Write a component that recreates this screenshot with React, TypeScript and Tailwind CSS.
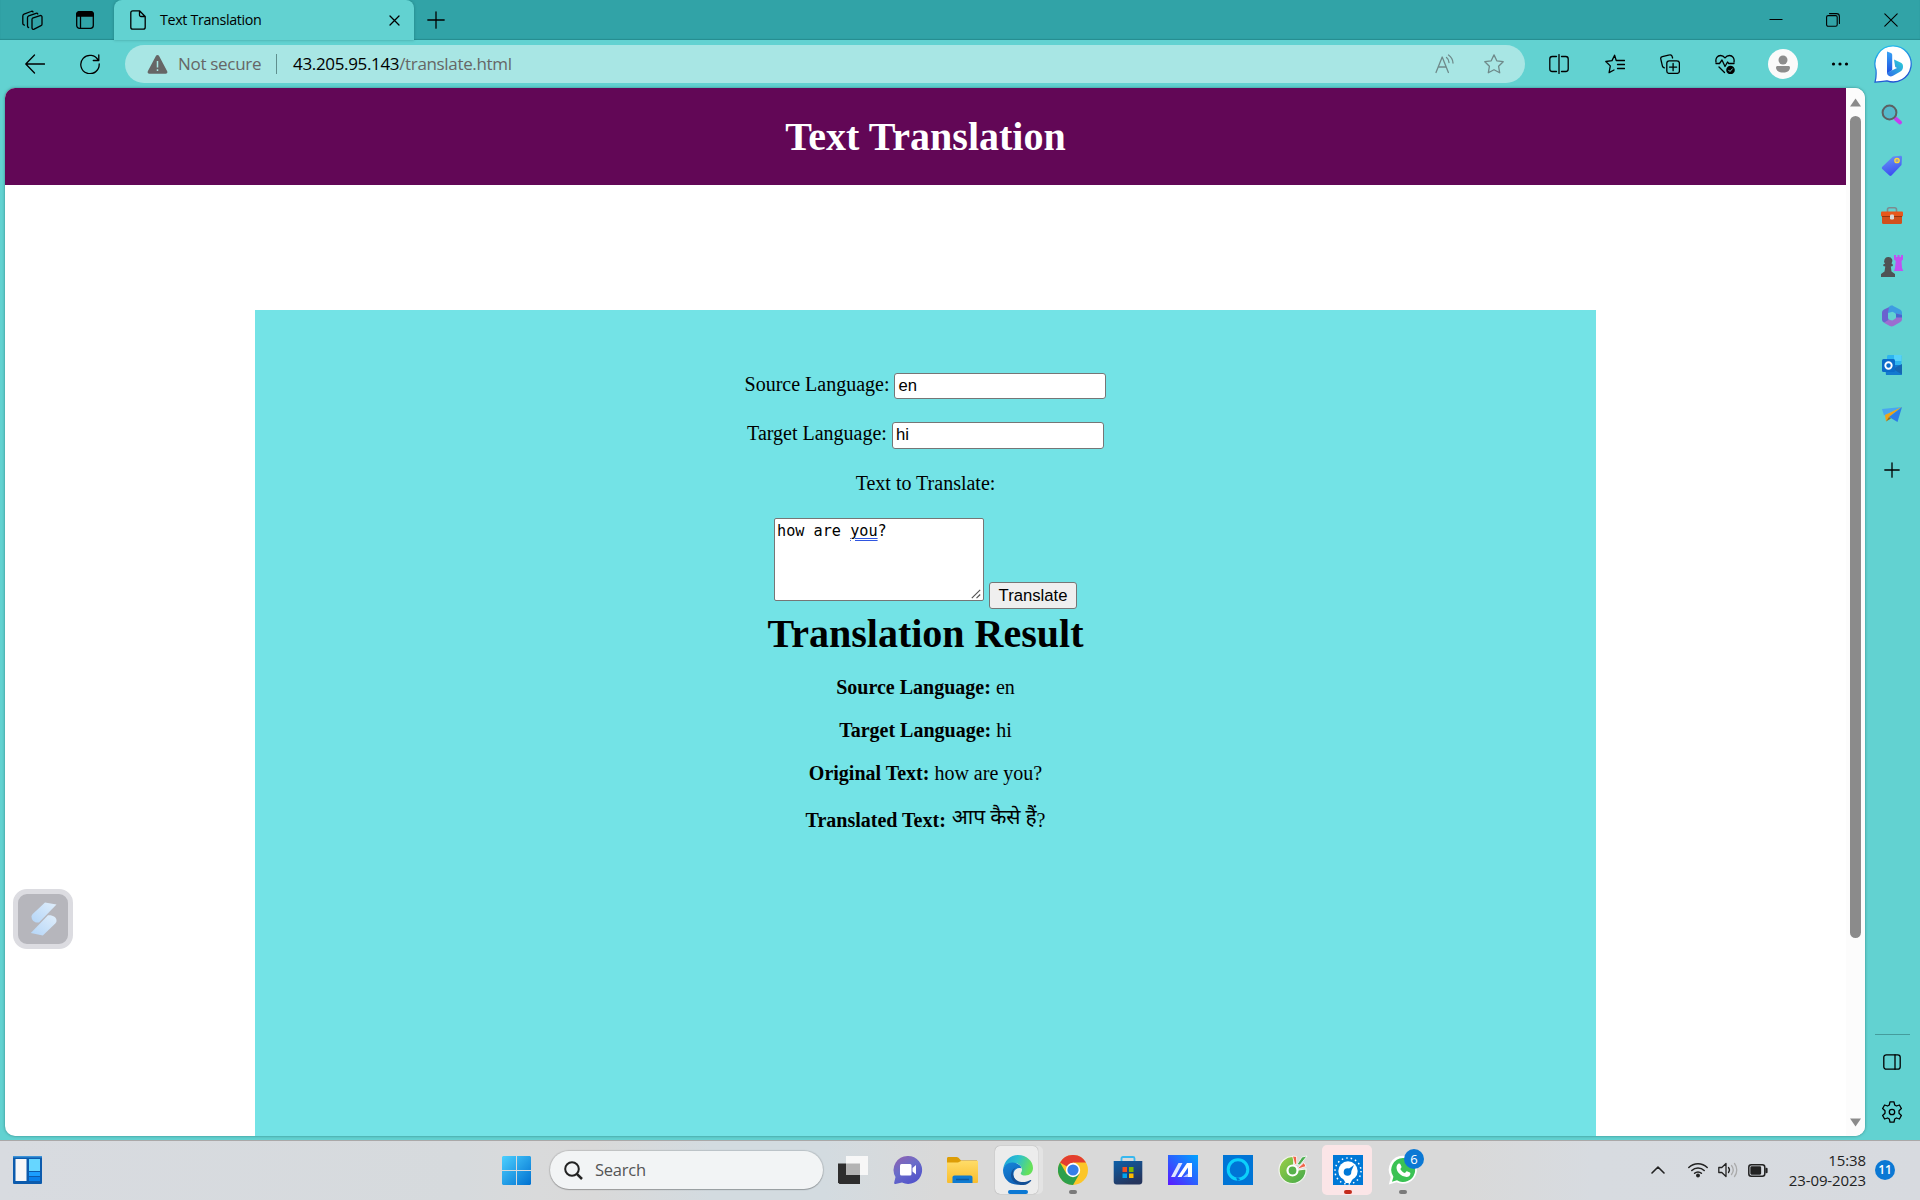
import React from "react";

type SvgProps = { children: React.ReactNode; w?: number; h?: number; vb?: string; className?: string };

function Line({ children, w = 20, h = 20, vb = "0 0 20 20", className = "" }: SvgProps) {
  return (
    <svg width={w} height={h} viewBox={vb} fill="none" stroke="currentColor" strokeWidth="1.3" strokeLinecap="round" strokeLinejoin="round" className={"shrink-0 " + className}>
      {children}
    </svg>
  );
}

function Art({ children, w = 30, h = 30, vb = "0 0 30 30", className = "" }: SvgProps) {
  return (
    <svg width={w} height={h} viewBox={vb} className={"shrink-0 " + className}>
      {children}
    </svg>
  );
}

const STAR = "M10 .9l2.8 5.9 6.4.9-4.6 4.6 1.1 6.5-5.7-3.1-5.7 3.1 1.1-6.5L.8 7.7l6.4-.9z";

function TabStrip() {
  return (
    <div className="flex h-10 items-start bg-[#31a3a7] text-black shadow-[inset_0_-1px_1px_rgba(0,70,70,0.25)]">
      <div className="flex h-10 w-[114px] items-center rounded-br-lg pl-[22px]">
        <Line w={21} h={21} vb="0 0 21 21">
          <path d="M10.5 8.2l7.6-2.6c1-.3 1.9.2 1.9 1.2v7.4c0 .7-.4 1.3-1 1.5l-6.8 3.4c-1.200.5-2.2.1-2.2-1V9.500c0-.6 0-1 .5-1.300z" />
          <path d="M6.600 17.500c-.7-.1-1.100-.6-1.100-1.400V7.700c0-.9.4-1.500 1.200-1.800l7.300-2.600c.8-.3 1.500 0 1.800.7" />
          <path d="M2.400 15.200C1.400 15 .8 14.500.8 13.600V6c0-.9.4-1.500 1.200-1.800L9 1.500c.9-.4 1.700-.1 2 .4" />
        </Line>
        <Line w={18} h={18} vb="0 0 18 18" className="ml-[33px]">
          <rect x=".7" y=".7" width="16.600" height="16.600" rx="2.800" />
          <path d="M.7 5V3.500A2.800 2.800 0 013.500.7h11a2.800 2.800 0 012.800 2.800V5z" fill="currentColor" />
          <path d="M4.500 5.500v11.500" />
        </Line>
      </div>
      <div className="flex h-10 w-[300px] items-center rounded-t-lg bg-[#62d2d1] pl-4 shadow-[0_0_3px_rgba(0,60,60,0.35)]">
        <Line w={16} h={20} vb="0 0 16 20">
          <path d="M9.500.8H2.800C1.700.8.8 1.700.8 2.800v14.400c0 1.100.9 2 2 2h10.400c1.100 0 2-.9 2-2V6.500L9.500.8zV5c0 .9.6 1.500 1.500 1.500h4.200" />
        </Line>
        <span className="ml-[14px] w-[229px] font-['Open_Sans',sans-serif] text-[14.300px] tracking-[-0.35px]">Text Translation</span>
        <Line w={11} h={11} vb="0 0 11 11"><path d="M1 1l9 9M10 1l-9 9" /></Line>
      </div>
      <div className="flex h-10 flex-1 items-center pl-[13px]">
        <Line w={18} h={18} vb="0 0 18 18"><path d="M9 .8v16.400M.8 9h16.400" /></Line>
        <div className="ml-auto flex items-center pr-[22px]">
          <Line w={14} h={14} vb="0 0 14 14"><path d="M.5 6.500h13" strokeLinecap="butt" strokeWidth="1" /></Line>
          <Line w={14} h={14} vb="0 0 14 14" className="ml-[43px]">
            <rect x=".6" y="2.600" width="10.600" height="10.600" rx="1.500" strokeWidth="1.100" />
            <path d="M3.500.6h7c1.700 0 2.900 1.200 2.900 2.900v7" strokeWidth="1.100" />
          </Line>
          <Line w={14} h={14} vb="0 0 14 14" className="ml-[44px]"><path d="M.8.8l12.400 12.400M13.200.8L.8 13.200" strokeWidth="1.100" /></Line>
        </div>
      </div>
    </div>
  );
}

function Toolbar() {
  return (
    <div className="flex h-12 items-center pl-[25px] pr-2 text-black">
      <Line><path d="M19.500 10H1M9.500 1L.8 10l8.700 9" /></Line>
      <Line className="ml-[35px]"><path d="M18.300 6.500A9.200 9.200 0 1019.200 10M18.800 1v5.500h-5.500" /></Line>
      <div className="ml-[25px] flex h-[38px] w-[1400px] items-center rounded-full bg-[#a8e6e4] pl-[22px] pr-[21px] font-['Open_Sans',sans-serif] text-[17px] text-[#666]">
        <svg width="21" height="19" viewBox="0 0 21 19" className="shrink-0">
          <path d="M8.900 1a1.800 1.800 0 013.200 0l8.100 15.200c.6 1.200-.2 2.600-1.600 2.600H2.400C1 18.800.2 17.400.8 16.200z" fill="#666" />
          <path d="M10.500 6v6.500M10.500 14.200v1.700" stroke="#a8e6e4" strokeWidth="1.500" />
        </svg>
        <span className="ml-2.5 w-[98px] tracking-[-0.3px]">Not secure</span>
        <span className="h-5 w-px bg-[#5f8f8e]" />
        <span className="ml-[16px] tracking-[-0.340px]"><span className="text-black">43.205.95.143</span>/translate.html</span>
        <div className="ml-auto flex items-center text-[#6f8a8a]">
          <Line><path d="M1 18.500L7.200 3l6.200 15.500M3.200 13h8M11.500 3.500c1.600 1.200 2.500 3 2.500 5M13.500 1c2.600 1.800 4.300 4.600 4.500 8" /></Line>
          <Line className="ml-[29px]"><path d={STAR} /></Line>
        </div>
      </div>
      <Line className="ml-[24px]">
        <path d="M7.500 2.500H3.300C1.800 2.500.8 3.500.8 5v10c0 1.500 1 2.500 2.500 2.500h4.200M12.500 2.500h4.200c1.500 0 2.500 1 2.500 2.500v10c0 1.500-1 2.500-2.500 2.500h-4.200M10 .6v18.800" />
      </Line>
      <Line className="ml-[36px]">
        <path d="M12 6.500h-.8L9.600 1.200 7 6.600.8 7.500l4.500 4.400-1.200 6.700L9 16M12.500 6.500h7M12.500 10.500h7M12.500 14.500h7" />
      </Line>
      <Line className="ml-[35px]">
        <rect x="6.800" y="6.800" width="12.600" height="12.600" rx="2.500" />
        <path d="M13.100 9.500v7.200M9.500 13.100h7.200M4.500 13.800c-1 0-1.700-.6-2-1.500L.8 5.200C.5 4 1.100 2.900 2.300 2.600L9.600.9c1-.3 2.200.3 2.500 1.400l.5 1.700" />
      </Line>
      <Line className="ml-[35px]">
        <path d="M1 8C.3 4.500 2.400 1.500 5.500 1.500c2 0 3.300.8 4.500 2.400 1.200-1.600 2.500-2.400 4.500-2.400C17.600 1.500 19.700 4.500 19 8M1 9.500h3.500L7 6l3 6.500L12.500 8l1.200 1.500H19M4 13l5.500 5.500" />
        <circle cx="15.500" cy="16" r="4.300" fill="currentColor" stroke="none" />
        <path d="M13.700 16.200l1.300 1.300 2.400-2.700" stroke="#62d2d1" strokeWidth="1" />
      </Line>
      <div className="ml-[33px] flex size-[30px] items-center justify-center rounded-full bg-[#fafafa]">
        <svg width="16" height="18" viewBox="0 0 16 18" fill="#8c8c8c"><circle cx="8" cy="5" r="4.500" /><path d="M2.500 11h11c.8 0 1.500.7 1.500 1.500 0 3-2.700 5-7 5s-7-2-7-5c0-.8.7-1.500 1.500-1.500z" /></svg>
      </div>
      <svg width="18" height="4" viewBox="0 0 18 4" className="ml-[33px] shrink-0"><circle cx="2.500" cy="2" r="1.600" /><circle cx="9" cy="2" r="1.600" /><circle cx="15.500" cy="2" r="1.600" /></svg>
      <svg width="38" height="38" viewBox="0 0 38 38" className="ml-[25px] shrink-0">
        <defs>
          <linearGradient id="bg1" x1="0" y1="0" x2=".3" y2="1"><stop offset="0" stopColor="#22c7ee" /><stop offset="1" stopColor="#2355d4" /></linearGradient>
          <linearGradient id="bg2" x1="0" y1="0" x2="0" y2="1"><stop offset="0" stopColor="#38a4f5" /><stop offset="1" stopColor="#1e4fe0" /></linearGradient>
          <linearGradient id="bg3" x1="1" y1="0" x2="0" y2="1"><stop offset="0" stopColor="#2bd3d6" /><stop offset="1" stopColor="#2f6bea" /></linearGradient>
        </defs>
        <path d="M19 .9A18 18 0 11 13 35.800c-3.500.5-7.500 1-12 1.300C2.200 33.500 2.400 31 2 25A18 18 0 0119 .9z" fill="#fff" stroke="url(#bg1)" strokeWidth="1.300" />
        <path d="M13 6.500l4 1.500c.8.300 1.200.9 1.200 1.700v15.600L13 28.500z" fill="url(#bg2)" />
        <path d="M20 14.500l6.500 3c1.900.9 2.800 2.500 2.500 4.800-.2 2-1.300 3.500-3 4.500l-7 4c-3.200 1.700-6-.2-6-3l10-4.800-1.800-1z" fill="url(#bg3)" />
      </svg>
    </div>
  );
}

function Field({ label, value, box, id }: { label: string; value: string; box: string; id: string }) {
  return (
    <div className="flex items-start justify-center">
      <label htmlFor={id} className="mr-[5px] leading-[22px]">{label}</label>
      <input id={id} defaultValue={value} spellCheck={false} className={"w-[212px] rounded-[3px] border border-[#767676] bg-white px-[3px] font-['Liberation_Sans',Arial,sans-serif] text-[16.670px] leading-5 text-black outline-none " + box} />
    </div>
  );
}

function Result({ label, value }: { label: string; value: string }) {
  return <p className="mb-[19px] leading-[24px]"><b>{label}</b> {value}</p>;
}

function WebPage() {
  return (
    <div className="relative flex h-[1048px] w-[1860px] overflow-hidden rounded-[10px] bg-white shadow-[0_0_3px_rgba(0,60,60,0.5)]">
      <main className="flex w-[1841px] flex-col font-['Liberation_Serif','Times_New_Roman',serif] text-[20px] text-black">
        <h1 className="h-[97px] bg-[#620756] text-center text-[40px] font-bold leading-[97px] text-white">Text Translation</h1>
        <section className="ml-[250px] mt-[125px] w-[1341px] flex-1 bg-[#73e3e6] pt-[63px] text-center">
          <Field id="source" label="Source Language:" value="en" box="h-[26px]" />
          <div className="h-[23px]" />
          <Field id="target" label="Target Language:" value="hi" box="h-[27px] pb-0.5" />
          <p className="mt-[22px] leading-[24px]">Text to Translate:</p>
          <div className="mt-[23px] flex h-[91px] justify-center">
            <div className="flex h-[83px] w-[210px] flex-col justify-between rounded-[2px] border border-[#767676] bg-white pl-[2px] pt-[3px] text-left font-['DejaVu_Sans_Mono',monospace] text-[15.200px] leading-[19px]">
              <div>how are <span className="underline decoration-[#2f55e0] decoration-double decoration-1 underline-offset-2">you</span>?</div>
              <svg width="10" height="10" viewBox="0 0 10 10" className="mb-px mr-[2px] self-end" stroke="#555" strokeWidth="1.200"><path d="M.8 9.200l8.400-8.400M5.500 9.200l3.700-3.700" /></svg>
            </div>
            <button className="ml-[5px] h-[27px] w-[88px] self-end rounded-[3px] border border-[#767676] bg-[#efefef] font-['Liberation_Sans',Arial,sans-serif] text-[16.670px] leading-[25px]">Translate</button>
          </div>
          <h1 className="mb-[18px] pt-px text-[40px] font-bold leading-[47px]">Translation Result</h1>
          <Result label="Source Language:" value="en" />
          <Result label="Target Language:" value="hi" />
          <Result label="Original Text:" value="how are you?" />
          <p className="mt-[23px] leading-[24px]"><b>Translated Text:</b> <span lang="hi" className="relative -top-[3px] ml-px font-['Liberation_Serif','Noto_Sans',sans-serif] text-[21px] tracking-[-0.1px]">आप कैसे हैं</span>?</p>
        </section>
      </main>
      <div className="flex w-[19px] flex-col items-center bg-[#fcfcfc] pt-2.5">
        <svg width="11" height="9" viewBox="0 0 11 9"><path d="M5.500.5L11 8.500H0z" fill="#8b8b8b" /></svg>
        <div className="mt-[9px] h-[822px] w-[11px] rounded-full bg-[#8b8b8b]" />
        <svg width="11" height="9" viewBox="0 0 11 9" className="mb-[9px] mt-auto"><path d="M5.500 8.500L11 .5H0z" fill="#8b8b8b" /></svg>
      </div>
      <div className="absolute left-2 top-[801px] flex size-[60px] items-center justify-center rounded-[14px] border-[5px] border-[#dcdce1] bg-[#b6b6bc]">
        <svg width="28" height="34" viewBox="0 0 28 34" className="ml-0.5">
          <defs><linearGradient id="fl" x1="1" y1="0" x2="0" y2="1"><stop offset="0" stopColor="#e0eefb" /><stop offset="1" stopColor="#b4d5f7" /></linearGradient></defs>
          <path d="M15 .5l11.500 2L9 20.500C4.500 21 1.500 18.500 1.500 14.500c0-1 .5-1.800 1.200-2.500z" fill="url(#fl)" />
          <path d="M12.800 33.500L.8 31 18 13.300c5-.4 8.500 2 8.500 5.500 0 1-.5 2-1.200 2.700z" fill="url(#fl)" />
        </svg>
      </div>
    </div>
  );
}

function SideBar() {
  return (
    <aside className="flex w-[54px] flex-col items-center">
      <div className="flex h-[1048px] flex-col items-center pt-[16px]">
        <Art w={22} h={22} vb="0 0 22 22">
          <path d="M14.500 14.500l4.500 4" stroke="#c63df0" strokeWidth="4" strokeLinecap="round" />
          <circle cx="8.500" cy="8.500" r="6.900" fill="#55b9cb" stroke="#5d6062" strokeWidth="2" />
        </Art>
        <Art w={22} h={22} vb="0 0 22 22" className="mt-[29px]">
          <defs><linearGradient id="tag" x2=".3" y2="1"><stop stopColor="#6a9bf5" /><stop offset="1" stopColor="#3d50f2" /></linearGradient></defs>
          <path d="M12 1.500l7.500-.7c1 0 1.600.6 1.500 1.600L20.500 10l-10 10.500c-.7.7-1.500.6-2.100 0L1.300 14c-.6-.7-.6-1.500 0-2.200z" fill="url(#tag)" />
          <circle cx="16" cy="5.500" r="2.200" fill="#a7a7a0" stroke="#ffd735" strokeWidth="1.300" />
        </Art>
        <Art w={24} h={20} vb="0 0 24 20" className="mt-[29px]">
          <path d="M7.500 6V3.500c0-1 .7-1.800 1.800-1.800h5.400c1.100 0 1.800.8 1.800 1.800V6" fill="none" stroke="#7d8b8f" strokeWidth="1.600" />
          <rect x="2" y="8" width="20" height="10" rx="1.500" fill="#d1501d" /><rect x="1" y="5.500" width="22" height="5" rx="1" fill="#e8571c" /><path d="M2 10.500h20" stroke="#973410" />
          <rect x="10" y="8.500" width="4" height="5" rx="1.200" fill="#d8d8d8" />
        </Art>
        <Art w={24} h={24} vb="0 0 24 24" className="mt-[28px]">
          <path d="M14 1h2v2h1.500V1h2v2h1.500V1h2v4.500L21.500 7l.5 7 1.300 3H14l1-3 .8-7L14 5.500z" fill="#bf52f2" />
          <path d="M8.500 3a4 4 0 013 6.600l1.300.9v1.500l-2 .5.700 5 3.500 2.500V23H1v-3l3.500-2.500.8-5-2-.5v-1.500l1.800-.9A4 4 0 018.500 3z" fill="#4f5254" />
        </Art>
        <Art w={22} h={22} vb="0 0 22 22" className="mt-[27px]">
          <path d="M11.500.5L3 4.500C1.500 5.300 1 6.500 1 8v6.500c0 1.500 1 2.500 2.200 3.200L8 15.500 7 13V8.500c0-1 .3-1.500 1-2z" fill="#6a62cf" />
          <path d="M8 2c1.300-1.500 2.700-1.700 4.200-1L19 4.500c1.500.8 2 2 2 3.500v4.500l-6-2c0-1.500-.3-2-1.200-2.500l-2.300-1.200L7 8z" fill="#3d9ce2" />
          <path d="M21 10v4c0 1.500-.7 2.500-2 3.200L12.500 21c-1.200.6-2.500.6-3.700 0L3 17.700 8 14.500l2 .8c.6.200 1.200.2 1.800-.1l2.400-1.400c.6-.4.900-1 .9-1.700V8.500z" fill="#9c6dd0" />
          <path d="M15 8.500L21 10v2.500l-6 0z" fill="#4668cf" />
        </Art>
        <Art w={22} h={22} vb="0 0 22 22" className="mt-[27px]">
          <path d="M6 2.500C6 1.700 6.500 1 7.500 1H19c1 0 1.500.7 1.500 1.500V11h-14.500z" fill="#2eb5f0" /><path d="M13 1h7.500v6H13z" fill="#55d2fa" />
          <path d="M4 11h17v9c0 .7-.5 1-1 1H5z" fill="#1279cf" /><path d="M12 15l9-5v10.500z" fill="#1466b3" />
          <rect x="1" y="5" width="13" height="13" rx="1.500" fill="#0b6cc9" /><circle cx="7.500" cy="11.500" r="3.200" fill="none" stroke="#fff" strokeWidth="1.900" />
        </Art>
        <Art w={22} h={20} vb="0 0 22 20" className="mt-[29px]">
          <path d="M1 4L21 2 3 10.500z" fill="#4aa6f0" /><path d="M5 16.500L4 10 21 2 8 12z" fill="#f0a216" /><path d="M8 12L21 2l-4.500 15z" fill="#2b7de9" /><path d="M5 16.500l3-4.500 2 1.500z" fill="#a06a13" />
        </Art>
        <Line w={16} h={16} vb="0 0 16 16" className="mt-[37px] text-black"><path d="M8 .8v14.400M.8 8h14.400" /></Line>
        <div className="mt-auto h-px w-[35px] bg-[#459c9c]" />
        <Line w={18} h={16} vb="0 0 18 16" className="mt-[19px] text-black"><rect x=".8" y=".8" width="16.400" height="14.400" rx="2.500" /><path d="M12 .8v14.400" /></Line>
        <Line w={22} h={22} vb="0 0 22 22" className="mb-[13px] mt-[31px] text-black">
          <path d="M9 .9h4l.7 3.100 1.700 1 3-1 2 3.500L18 9.700v2.600l2.400 2.200-2 3.500-3-1-1.700 1-.7 3.100H9L8.300 18l-1.700-1-3 1-2-3.500L4 12.300V9.700L1.600 7.500l2-3.500 3 1 1.700-1z" /><circle cx="11" cy="11" r="2.700" />
        </Line>
      </div>
    </aside>
  );
}

function Slot({ children, mark = "" }: { children: React.ReactNode; mark?: string }) {
  return (
    <div className="relative flex h-[60px] w-[55px] shrink-0 items-center justify-center">
      {children}
      {mark && <span className={"absolute bottom-[6px] h-1 rounded-full " + mark} />}
    </div>
  );
}

function TaskBar() {
  return (
    <footer className="flex h-[60px] items-center border-t border-[#aaa8a8] bg-[linear-gradient(90deg,#d8dbe0_0%,#d6dadd_24%,#d9dadb_28%,#d9d9d9_31%,#d3dbe0_37%,#d3dbe0_43%,#d9d9d9_49%,#d9d9d9_76%,#d7dbe0_83%,#d7dadf_100%)] pb-px font-['Open_Sans',sans-serif] text-[#222]">
      <Art w={29} h={28} vb="0 0 29 28" className="ml-[13px]">
        <rect width="29" height="28" rx="1" fill="#0c5bad" /><rect width="29" height="1.500" fill="#3b93d9" />
        <rect x="2.500" y="3" width="11" height="22" fill="#f7f7f8" /><path d="M16 3h11v12H16z" fill="#66d6ff" /><path d="M16 16h11v4H16z" fill="#1b9eff" /><path d="M16 21h11v4H16z" fill="#0a80ea" />
      </Art>
      <Art w={29} h={29} vb="0 0 29 29" className="ml-[460px]">
        <defs><linearGradient id="win" x2="1" y2="1"><stop stopColor="#4cd0ff" /><stop offset="1" stopColor="#0070d0" /></linearGradient></defs>
        <path d="M1 0h13v14H0V1zM15 0h13l1 1v13H15zM0 15h14v14H1l-1-1zM15 15h14v13l-1 1H15z" fill="url(#win)" />
      </Art>
      <div className="ml-[19px] flex h-[38px] w-[273px] items-center rounded-full bg-[#f2f4f5] pl-[14px] text-[#555] shadow-[0_0_1px_1px_rgba(0,0,0,0.12),0_1px_1px_rgba(0,0,0,0.2)]">
        <svg width="19" height="19" viewBox="0 0 19 19" fill="none" stroke="#222" strokeWidth="2"><circle cx="8" cy="8" r="6.800" /><path d="M12.800 12.800l5.200 5.200" strokeWidth="2.500" /></svg>
        <span className="ml-3 pt-px text-[16.500px] tracking-[-0.25px]">Search</span>
      </div>
      <div className="ml-[2px] flex">
        <Slot><Art><path d="M0 8.500h22V29H1.500L0 27.500z" fill="#2e2e2e" /><path d="M8 1h22v19H8z" fill="#f7f7f7" /><path d="M8 8.500h14V20H8z" fill="#b4b4b4" /></Art></Slot>
        <Slot><Art>
          <defs><linearGradient id="chat" x2=".6" y2="1"><stop stopColor="#9460ae" /><stop offset=".5" stopColor="#6a6dc9" /><stop offset="1" stopColor="#5354cb" /></linearGradient></defs>
          <path d="M15 1a14 14 0 11-6 26.600L2.500 29c-.9.100-1.500-.5-1.300-1.400L2.500 22A14 14 0 0115 1z" fill="url(#chat)" />
          <rect x="7" y="9" width="11.500" height="11.500" rx="1.500" fill="#fff" /><path d="M19.500 13l3.500-3v9.500l-3.500-3z" fill="#fff" />
        </Art></Slot>
        <Slot><Art w={31} h={28} vb="0 0 31 28">
          <defs><linearGradient id="fold" x2="0" y2="1"><stop stopColor="#ffdc68" /><stop offset="1" stopColor="#f9bd2d" /></linearGradient></defs>
          <path d="M0 2.500C0 1.500.6 1 1.500 1h8c.8 0 1.400.2 2 .8l2.500 2.700h15c1.200 0 1.800.6 1.800 1.500V14H0z" fill="#dd9d06" />
          <path d="M0 6.500h11l3-1.500h17v20.500c0 1-.5 1.500-1.500 1.500h-28C.5 27 0 26.500 0 25.500z" fill="url(#fold)" />
          <path d="M5.500 27v-5.500c0-1.200.8-2 2-2h16c1.200 0 2 .8 2 2V27z" fill="#0f7bd1" /><path d="M9 23.500h13" stroke="#0c599f" strokeWidth="1.500" />
        </Art></Slot>
        <Slot mark="w-5 bg-[#0b78d4]">
          <div className="absolute left-[5px] top-[6px] h-12 w-[43px] rounded-[5px] bg-[#ececec] shadow-[0_0_1px_rgba(0,0,0,0.4),5px_0_0_#e3e3e3]" />
          <Art className="relative">
            <defs>
              <linearGradient id="e1" x2="1" y2=".3"><stop stopColor="#1aa0dc" /><stop offset=".5" stopColor="#2cc0cf" /><stop offset="1" stopColor="#66e15a" /></linearGradient>
              <linearGradient id="e2" x2=".4" y2="1"><stop stopColor="#1686d9" /><stop offset="1" stopColor="#0f62b8" /></linearGradient>
            </defs>
            <path d="M.3 14C1 6 7.200 0 15 0c8.500 0 15 6 15 13 0 4.500-3.300 7.500-7.500 7.500-3 0-5-1-4.800-2.200.2-.8 1.300-1.400 1.300-3.500C19 10 14 7.500 9.500 8 5 8.500 1.500 11 .3 14z" fill="url(#e1)" />
            <path d="M0 15c.7-5 5.500-8 10-7.500 5 .5 8.500 3.500 8.500 6-4-1.800-8.500 1.500-8 6.500.5 5 4.500 8.500 9 9C8 32 0 24.500 0 15z" fill="url(#e2)" />
            <path d="M13 12.600c-4 2-4.500 9.400 1 12.900 4.500 2.800 10 1.500 13.500-.5.700-.3 1 .2.500.9C25.500 29 21.500 30.500 17.500 30 12 29 7.500 24.500 8 19.500c.3-3.500 2.300-6 5-6.900z" fill="#124f96" />
          </Art>
        </Slot>
        <Slot mark="w-2 bg-[#7a7a7a]"><Art>
          <circle cx="15" cy="15" r="15" fill="#fcc629" /><path d="M15 15L2 7.500A15 15 0 0128 7.500H15z" fill="#e33e30" /><path d="M2 7.500A15 15 0 0015 30l6.500-11.200L8.500 18.800z" fill="#2da04b" /><circle cx="15" cy="15" r="7.200" fill="#fff" /><circle cx="15" cy="15" r="5.600" fill="#347ee8" />
        </Art></Slot>
        <Slot><Art>
          <defs><linearGradient id="store" x2=".5" y2="1"><stop stopColor="#0d60a9" /><stop offset="1" stopColor="#25355d" /></linearGradient></defs>
          <path d="M8.500 7V3.500C8.500 2.500 9 2 10 2h10c1 0 1.500.5 1.500 1.500V7" fill="none" stroke="#37b8ef" strokeWidth="1.800" />
          <path d="M.7 6h28.600v20.500c0 1.800-1.200 3-3 3H3.700c-1.800 0-3-1.200-3-3z" fill="url(#store)" />
          <path d="M9.500 12H14v5H9.500z" fill="#f25022" /><path d="M16 12h4.500v5H16z" fill="#7fba00" /><path d="M9.500 18.500H14v4.500H9.500z" fill="#00a4ef" /><path d="M16 18.500h4.500v4.500H16z" fill="#ffb900" />
        </Art></Slot>
        <Slot><Art>
          <defs><linearGradient id="asus" x1="0" y1="1" x2="1" y2="0"><stop stopColor="#5b18ff" /><stop offset=".5" stopColor="#2a61ff" /><stop offset="1" stopColor="#00a4ff" /></linearGradient></defs>
          <path d="M0 0h30v30H0z" fill="url(#asus)" /><path d="M3 22L10.500 8h4L7 22z" fill="#dfe5ff" /><path d="M9.500 22L19 8h5v14h-4V12.500L13.500 22z" fill="#fff" /><path d="M15 22l5-3.500V22z" fill="#b7c4ff" />
        </Art></Slot>
        <Slot><Art>
          <path d="M0 0h30v30H0z" fill="#0075d6" /><circle cx="15" cy="14.500" r="9.800" fill="none" stroke="#0cd0fb" strokeWidth="3" /><path d="M13 22.500c2 .3 3.500 1 4 2l-2.500 1.500z" fill="#0075d6" />
        </Art></Slot>
        <Slot><Art>
          <defs><linearGradient id="gg" x2="1" y2="1"><stop stopColor="#9dd045" /><stop offset="1" stopColor="#42a84b" /></linearGradient></defs>
          <path d="M16 1.600A13.500 13.500 0 1028 14l-12.500 1.500z" fill="url(#gg)" stroke="#f2f6ee" strokeWidth="1.200" />
          <circle cx="14.500" cy="15.500" r="5" fill="#58b14b" stroke="#fff" strokeWidth="2.200" />
          <path d="M14.500 1l4 .5.3 7.500-2 .5z" fill="#f0644a" stroke="#fff" strokeWidth=".8" /><path d="M19 9.500L24 2l5-1-7 9z" fill="#49ae4e" stroke="#fff" strokeWidth=".8" /><path d="M20.500 12.500L26 7.500l2 4-6.500 2z" fill="#f0644a" stroke="#fff" strokeWidth=".8" />
        </Art></Slot>
        <Slot mark="w-2 bg-[#c42b1c]">
          <div className="absolute left-[2px] top-[5px] h-[50px] w-[50px] rounded-[5px] bg-[#fbe5e7]" />
          <Art className="relative">
            <path d="M0 0h30v30H0z" fill="#0078d7" /><circle cx="15" cy="16" r="13" fill="none" stroke="#fff" strokeWidth="1.500" strokeDasharray="1.500 3.040" />
            <circle cx="15" cy="16" r="9.700" fill="#fff" /><path d="M10 23h10l-2.500 5h-5z" fill="#fff" /><circle cx="14.500" cy="17" r="3.800" fill="#0078d7" /><path d="M14 15l7-5-3.500 8z" fill="#0078d7" />
          </Art>
        </Slot>
        <Slot mark="w-2 bg-[#7a7a7a]">
          <Art>
            <path d="M15 .8a14 14 0 11-6.500 26.500L.8 29.500l2-7.500A14 14 0 0115 .8z" fill="#fff" /><path d="M15 3a12 12 0 11-6 22.300l-5 1.500 1.400-5A12 12 0 0115 3z" fill="#3bc254" />
            <path d="M10.800 8.500c.7-.3 1.300 0 1.600.7l1 2.300c.2.500.1.900-.2 1.300l-.9 1.100c1 2 2.500 3.300 4.700 4.200l1.300-1.500c.3-.4.700-.4 1.100-.2l2.500 1.200c.5.300.6.600.5 1.100-.4 2.200-2 3.200-3.800 3.200-5.500-.4-10-5-10.100-9.200 0-2 1.100-3.700 2.300-4.200z" fill="#fff" />
          </Art>
          <span className="absolute left-[29px] top-[9px] flex size-5 items-center justify-center rounded-full bg-[#0b78d4] text-[13px] leading-none text-white">6</span>
        </Slot>
      </div>
      <div className="ml-auto flex items-center pr-[25px]">
        <Line w={14} h={8} vb="0 0 14 8"><path d="M1 7l6-6 6 6" strokeWidth="1.600" /></Line>
        <Line w={20} h={16} vb="0 0 20 16" className="ml-[23px]"><path d="M.8 5.500a13 13 0 0118.400 0M3.800 8.500a8.800 8.800 0 0112.400 0M6.600 11.300a4.800 4.800 0 016.800 0" strokeWidth="1.500" /><circle cx="10" cy="13.500" r="1.300" fill="currentColor" /></Line>
        <Line w={20} h={16} vb="0 0 20 16" className="ml-[10px]"><path d="M.8 5.500h3L8 1.500v13l-4.200-4h-3zM10.500 5.500c1.200 1.500 1.200 3.500 0 5" /><path d="M13.500 3.500c2.200 2.800 2.200 6.200 0 9M16.500 1.500c3 3.800 3 9.200 0 13" stroke="#aaa" /></Line>
        <Line w={20} h={13} vb="0 0 20 13" className="ml-[10px]"><rect x=".8" y=".8" width="16" height="11.400" rx="2.500" strokeWidth="1.500" /><rect x="3" y="3" width="9.500" height="7" rx=".5" fill="currentColor" /><path d="M18.500 4.800v3.400" strokeWidth="2.200" /></Line>
        <div className="ml-[14px] w-[84px] whitespace-nowrap text-right text-[15px] leading-5 tracking-[-0.1px]"><div>15:38</div><div>23-09-2023</div></div>
        <span className="ml-[9px] flex size-5 items-center justify-center rounded-full bg-[#0b78d4] text-[12px] font-semibold leading-none text-white">11</span>
      </div>
    </footer>
  );
}

export default function App() {
  return (
    <div className="flex h-[1200px] w-[1920px] flex-col overflow-hidden bg-[#62d2d1]">
      <TabStrip />
      <Toolbar />
      <div className="flex h-[1052px] pl-[5px]">
        <WebPage />
        <SideBar />
      </div>
      <TaskBar />
    </div>
  );
}
